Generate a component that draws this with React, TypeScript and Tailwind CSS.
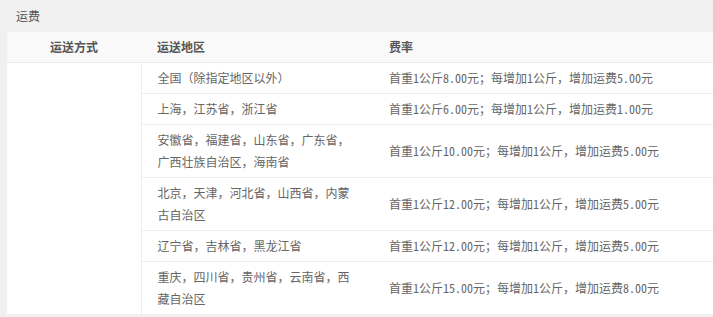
import React from "react";

const rows: { region: string[]; rate: string }[] = [
  { region: ["全国（除指定地区以外）"], rate: "首重1公斤8.00元；每增加1公斤，增加运费5.00元" },
  { region: ["上海，江苏省，浙江省"], rate: "首重1公斤6.00元；每增加1公斤，增加运费1.00元" },
  { region: ["安徽省，福建省，山东省，广东省，", "广西壮族自治区，海南省"], rate: "首重1公斤10.00元；每增加1公斤，增加运费5.00元" },
  { region: ["北京，天津，河北省，山西省，内蒙", "古自治区"], rate: "首重1公斤12.00元；每增加1公斤，增加运费5.00元" },
  { region: ["辽宁省，吉林省，黑龙江省"], rate: "首重1公斤12.00元；每增加1公斤，增加运费5.00元" },
  { region: ["重庆，四川省，贵州省，云南省，西", "藏自治区"], rate: "首重1公斤15.00元；每增加1公斤，增加运费8.00元" },
];

export default function App() {
  return (
    <div
      className="w-[713px] h-[317px] overflow-hidden bg-[#f0f0f0] text-[12px] text-[#666]"
      style={{ fontFamily: '"Noto Sans Mono CJK SC", "Noto Sans CJK SC", sans-serif' }}
    >
      <div className="h-8 pl-4 flex items-center text-[#555]">运费</div>
      <div className="pl-[7px] pb-[4px]">
        <table className="w-full border-collapse bg-white table-fixed">
          <colgroup>
            <col className="w-[134px]" />
            <col className="w-[233px]" />
            <col />
          </colgroup>
          <thead>
            <tr className="bg-[#f9f9f9]">
              <th className="py-1 leading-[22px] h-[30px] text-center font-bold text-[#555] border-b border-[#ececec]">运送方式</th>
              <th className="py-1 pl-[16px] leading-[22px] text-left font-bold text-[#555] border-b border-[#ececec]">运送地区</th>
              <th className="py-1 pl-[15px] leading-[22px] text-left font-bold text-[#555] border-b border-[#ececec]">费率</th>
            </tr>
          </thead>
          <tbody>
            {rows.map((r, i) => (
              <tr key={i}>
                {i === 0 && (
                  <td rowSpan={rows.length} className="border-r border-[#ececec]"></td>
                )}
                <td className="py-1 pl-[16px] pr-2 leading-[22px] align-middle border-t border-[#ececec]">
                  {r.region.map((l, j) => (
                    <div key={j} className="whitespace-nowrap">{l}</div>
                  ))}
                </td>
                <td className="py-1 pl-[15px] leading-[22px] align-middle whitespace-nowrap border-t border-[#ececec]">
                  {r.rate}
                </td>
              </tr>
            ))}
          </tbody>
        </table>
      </div>
    </div>
  );
}
